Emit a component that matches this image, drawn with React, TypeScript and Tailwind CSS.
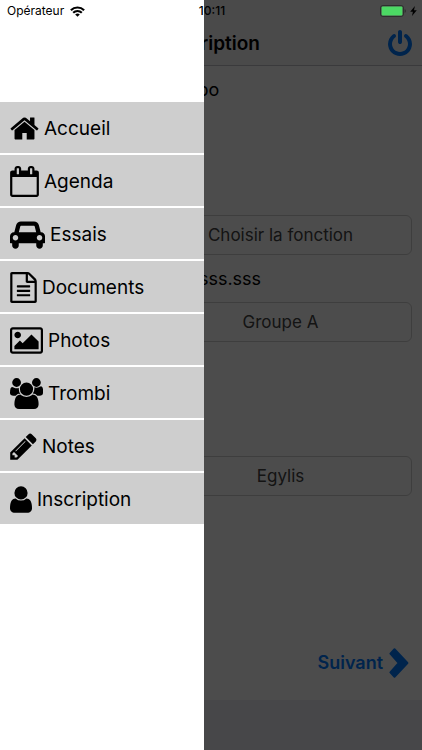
import React from 'react';

type IconProps = {
    d: string;
    viewBox: string;
    className: string;
};

function Icon({ d, viewBox, className }: IconProps) {
    return (
        <svg viewBox={viewBox} className={className} fill="currentColor" aria-hidden="true">
            <path d={d} />
        </svg>
    );
}

const menu = [
    {
        name: 'Accueil',
        href: '#accueil',
        viewBox: '64 0 1664 1792',
        size: 'h-[31px] w-[29px]',
        d: 'M1472 992v480q0 26-19 45t-45 19h-384v-384h-256v384h-384q-26 0-45-19t-19-45v-480q0-1 .5-3t.5-3l575-474 575 474q1 2 1 6zm223-69l-62 74q-8 9-21 11h-3q-13 0-21-7l-692-577-692 577q-12 8-24 7-13-2-21-11l-62-74q-8-10-7-23.5t11-21.5l719-599q32-26 76-26t76 26l244 204v-195q0-14 9-23t23-9h192q14 0 23 9t9 23v408l219 182q10 8 11 21.5t-7 23.5z',
    },
    {
        name: 'Agenda',
        href: '#agenda',
        viewBox: '64 0 1664 1792',
        size: 'h-[31px] w-[29px]',
        d: 'M192 1664h1408v-1024h-1408v1024zm384-1216v-288q0-14-9-23t-23-9h-64q-14 0-23 9t-9 23v288q0 14 9 23t23 9h64q14 0 23-9t9-23zm768 0v-288q0-14-9-23t-23-9h-64q-14 0-23 9t-9 23v288q0 14 9 23t23 9h64q14 0 23-9t9-23zm384-64v1280q0 52-38 90t-90 38h-1408q-52 0-90-38t-38-90v-1280q0-52 38-90t90-38h128v-96q0-66 47-113t113-47h64q66 0 113 47t47 113v96h384v-96q0-66 47-113t113-47h64q66 0 113 47t47 113v96h128q52 0 90 38t38 90z',
    },
    {
        name: 'Essais',
        href: '#essais',
        viewBox: '0 0 2048 1792',
        size: 'h-[31px] w-[35px]',
        d: 'M480 1088q0-66-47-113t-113-47-113 47-47 113 47 113 113 47 113-47 47-113zm36-320h1016l-89-357q-2-8-14-17.5t-21-9.5h-768q-9 0-21 9.5t-14 17.5zm1372 320q0-66-47-113t-113-47-113 47-47 113 47 113 113 47 113-47 47-113zm160-96v384q0 14-9 23t-23 9h-96v128q0 80-56 136t-136 56-136-56-56-136v-128h-1024v128q0 80-56 136t-136 56-136-56-56-136v-128h-96q-14 0-23-9t-9-23v-384q0-93 65.5-158.5t158.5-65.5h28l105-419q23-94 104-157.5t179-63.5h768q98 0 179 63.5t104 157.5l105 419h28q93 0 158.5 65.5t65.5 158.5z',
    },
    {
        name: 'Documents',
        href: '#documents',
        viewBox: '128 0 1536 1792',
        size: 'h-[31px] w-[27px]',
        d: 'M1596 380q28 28 48 76t20 88v1152q0 40-28 68t-68 28h-1344q-40 0-68-28t-28-68v-1600q0-40 28-68t68-28h896q40 0 88 20t76 48zm-444-244v376h376q-10-29-22-41l-313-313q-12-12-41-22zm384 1528v-1024h-416q-40 0-68-28t-28-68v-416h-768v1536h1280zm-1024-864q0-14 9-23t23-9h704q14 0 23 9t9 23v64q0 14-9 23t-23 9h-704q-14 0-23-9t-9-23v-64zm736 224q14 0 23 9t9 23v64q0 14-9 23t-23 9h-704q-14 0-23-9t-9-23v-64q0-14 9-23t23-9h704zm0 256q14 0 23 9t9 23v64q0 14-9 23t-23 9h-704q-14 0-23-9t-9-23v-64q0-14 9-23t23-9h704z',
    },
    {
        name: 'Photos',
        href: '#photos',
        viewBox: '64 0 1920 1792',
        size: 'h-[31px] w-[33px]',
        d: 'M704 576q0 80-56 136t-136 56-136-56-56-136 56-136 136-56 136 56 56 136zm1024 384v448h-1408v-192l320-320 160 160 512-512zm96-704h-1600q-13 0-22.5 9.5t-9.5 22.5v1216q0 13 9.5 22.5t22.5 9.5h1600q13 0 22.5-9.5t9.5-22.5v-1216q0-13-9.5-22.5t-22.5-9.5zm160 32v1216q0 66-47 113t-113 47h-1600q-66 0-113-47t-47-113v-1216q0-66 47-113t113-47h1600q66 0 113 47t47 113z',
    },
    {
        name: 'Trombi',
        href: '#trombi',
        viewBox: '64 0 1920 1792',
        size: 'h-[31px] w-[33px]',
        d: 'M657 896q-162 5-265 128h-134q-82 0-138-40.5t-56-118.5q0-353 124-353 6 0 43.5 21t97.5 42.5 119 21.5q67 0 133-23-5 37-5 66 0 159 93 297zm1071 637q0 120-73 189.5t-194 69.5h-874q-121 0-194-69.5t-73-189.5q0-53 3.5-103.5t14-109 26.5-108.5 43-97.5 62-81 85.5-53.5 111.5-20q10 0 43 21.5t73 48 107 48 135 21.5 135-21.5 107-48 73-48 43-21.5q61 0 111.5 20t85.5 53.5 62 81 43 97.5 26.5 108.5 14 109 3.5 103.5zm-1024-1277q0 106-75 181t-181 75-181-75-75-181 75-181 181-75 181 75 75 181zm704 384q0 159-112.5 271.5t-271.5 112.5-271.5-112.5-112.5-271.5 112.5-271.5 271.5-112.5 271.5 112.5 112.5 271.5zm576 225q0 78-56 118.5t-138 40.5h-134q-103-123-265-128 93-138 93-297 0-29-5-66 66 23 133 23 59 0 119-21.5t97.5-42.5 43.5-21q124 0 124 353zm-128-609q0 106-75 181t-181 75-181-75-75-181 75-181 181-75 181 75 75 181z',
    },
    {
        name: 'Notes',
        href: '#notes',
        viewBox: '128 0 1536 1792',
        size: 'h-[31px] w-[27px]',
        d: 'M491 1536l91-91-235-235-91 91v107h128v128h107zm523-928q0-22-22-22-10 0-17 7l-542 542q-7 7-7 17 0 22 22 22 10 0 17-7l542-542q7-7 7-17zm-54-192l416 416-832 832h-416v-416zm683 96q0 53-37 90l-166 166-416-416 166-165q36-38 90-38 53 0 91 38l235 234q37 39 37 91z',
    },
    {
        name: 'Inscription',
        href: '#inscription',
        viewBox: '256 0 1280 1792',
        size: 'h-[31px] w-[22px]',
        d: 'M1536 1399q0 109-62.5 187t-150.5 78h-854q-88 0-150.5-78t-62.5-187q0-85 8.5-160.5t31.5-152 58.5-131 94-89 134.5-34.5q131 128 313 128t313-128q76 0 134.5 34.5t94 89 58.5 131 31.5 152 8.5 160.5zm-256-887q0 159-112.5 271.5t-271.5 112.5-271.5-112.5-112.5-271.5 112.5-271.5 271.5-112.5 271.5 112.5 112.5 271.5z',
    },
];

const powerOff =
    'M1664 896q0 156-61 298t-164 245-245 164-298 61-298-61-245-164-164-245-61-298q0-182 80.5-343t226.5-270q43-32 95.5-25t83.5 50q32 42 24.5 94.5t-49.5 84.5q-98 74-151.5 181t-53.5 228q0 104 40.5 198.5t109.5 163.5 163.5 109.5 198.5 40.5 198.5-40.5 163.5-109.5 109.5-163.5 40.5-198.5q0-121-53.5-228t-151.5-181q-42-32-49.5-84.5t24.5-94.5q31-43 84-50t95 25q146 109 226.5 270t80.5 343zm-640-768v640q0 52-38 90t-90 38-90-38-38-90v-640q0-52 38-90t90-38 90 38 38 90z';

function TextRow({ label, value = '' }: { label: string; value?: string }) {
    return (
        <div className="flex h-[47px] pl-[139px]">
            <input aria-label={label} defaultValue={value} className="min-w-0 flex-1 bg-transparent px-1 outline-none" />
        </div>
    );
}

function PickerRow({ label, value }: { label: string; value: string }) {
    return (
        <div className="flex pl-[139px]">
            <button
                type="button"
                title={label}
                className="h-10 min-w-0 flex-1 rounded-md border border-[#cfcfcf] text-center text-[17px] text-[#444]"
            >
                {value}
            </button>
        </div>
    );
}

function StatusBar() {
    return (
        <div className="absolute inset-x-0 top-0 grid h-[22px] grid-cols-3 items-center pl-[7px] pr-[5px] text-xs text-black">
            <div className="flex items-center gap-[6px]">
                <span>Opérateur</span>
                <svg viewBox="0 0 15 11" className="h-[11px] w-[15px]" fill="none" stroke="currentColor" aria-hidden="true">
                    <path d="M.9 4.2a9.4 9.4 0 0 1 13.2 0" strokeWidth="2.2" />
                    <path d="M3.2 6.8a6 6 0 0 1 8.6 0" strokeWidth="2.1" />
                    <path d="M7.5 10.8 5.2 8.5a3.3 3.3 0 0 1 4.6 0z" fill="currentColor" stroke="none" />
                </svg>
            </div>
            <span className="text-center font-medium">10:11</span>
            <div className="flex items-center justify-end gap-1">
                <svg viewBox="0 0 26 12" className="h-3 w-[26px]" aria-hidden="true">
                    <rect x=".5" y=".5" width="23" height="11" rx="2.5" fill="none" stroke="#2e2e2e" />
                    <rect x="1.6" y="1.6" width="20.8" height="8.8" rx="1" fill="#4cd964" />
                    <path d="M24.6 4v4q1.3-.6 1.3-2t-1.3-2z" fill="#2e2e2e" />
                </svg>
                <svg viewBox="0 0 7 10" className="h-[10px] w-[7px]" fill="currentColor" aria-hidden="true">
                    <path d="M4.9 0 .2 5.7h2.7L2 10l4.8-5.8H4z" />
                </svg>
            </div>
        </div>
    );
}

export default function App() {
    return (
        <div className="relative flex min-h-screen flex-col bg-white font-['Inter',sans-serif] text-black">
            {/* Registration screen */}
            <header className="grid h-[66px] grid-cols-[1fr_auto_1fr] items-center border-b border-[#c4c4c8] bg-[#f8f8f8] px-2 pt-[22px]">
                <h1 className="col-start-2 text-[19px] font-semibold leading-[31px]">Inscription</h1>
                <button type="button" aria-label="Déconnexion" className="justify-self-end text-[#007aff]">
                    <Icon d={powerOff} viewBox="0 0 1792 1792" className="size-7" />
                </button>
            </header>

            <main className="flex flex-1 flex-col px-[10px] text-lg">
                <form>
                    <TextRow label="Nom" value="Bobobo" />
                    <TextRow label="Prénom" />
                    <TextRow label="Société" />
                    <div className="mt-2">
                        <PickerRow label="Fonction" value="Choisir la fonction" />
                    </div>
                    <TextRow label="Email" value="sss@sss.sss" />
                    <PickerRow label="Groupe" value="Groupe A" />
                    <TextRow label="Mobile" />
                    <TextRow label="Ville" />
                    <div className="mt-5">
                        <PickerRow label="Agence" value="Egylis" />
                    </div>
                </form>
                <div className="mt-auto flex justify-end pb-5 pr-[3px]">
                    <button type="button" className="flex items-center gap-[6px] font-semibold text-[#007aff]">
                        Suivant
                        <svg
                            viewBox="0 0 20 34"
                            className="h-[34px] w-5"
                            fill="currentColor"
                            stroke="currentColor"
                            strokeWidth="2"
                            strokeLinejoin="round"
                            aria-hidden="true"
                        >
                            <path d="M5.5 3.2 18.4 17 5.5 30.8 1.4 26.4 9.8 17 1.4 7.6z" />
                        </svg>
                    </button>
                </div>
            </main>

            <footer className="h-[50px] bg-[#efeff4]" />

            <div className="absolute inset-0 bg-black/70" />

            {/* Side menu */}
            <nav className="absolute inset-y-0 left-0 w-[204px] bg-white pt-[102px]">
                <ul className="flex flex-col gap-[2px]">
                    {menu.map((item) => (
                        <li key={item.name}>
                            <a
                                href={item.href}
                                className="flex h-[51px] items-center gap-[5px] bg-[#cecece] pl-[10px] pt-[2px] text-[19px] leading-[31px]"
                            >
                                <Icon d={item.d} viewBox={item.viewBox} className={item.size} />
                                {item.name}
                            </a>
                        </li>
                    ))}
                </ul>
            </nav>

            <StatusBar />
        </div>
    );
}
